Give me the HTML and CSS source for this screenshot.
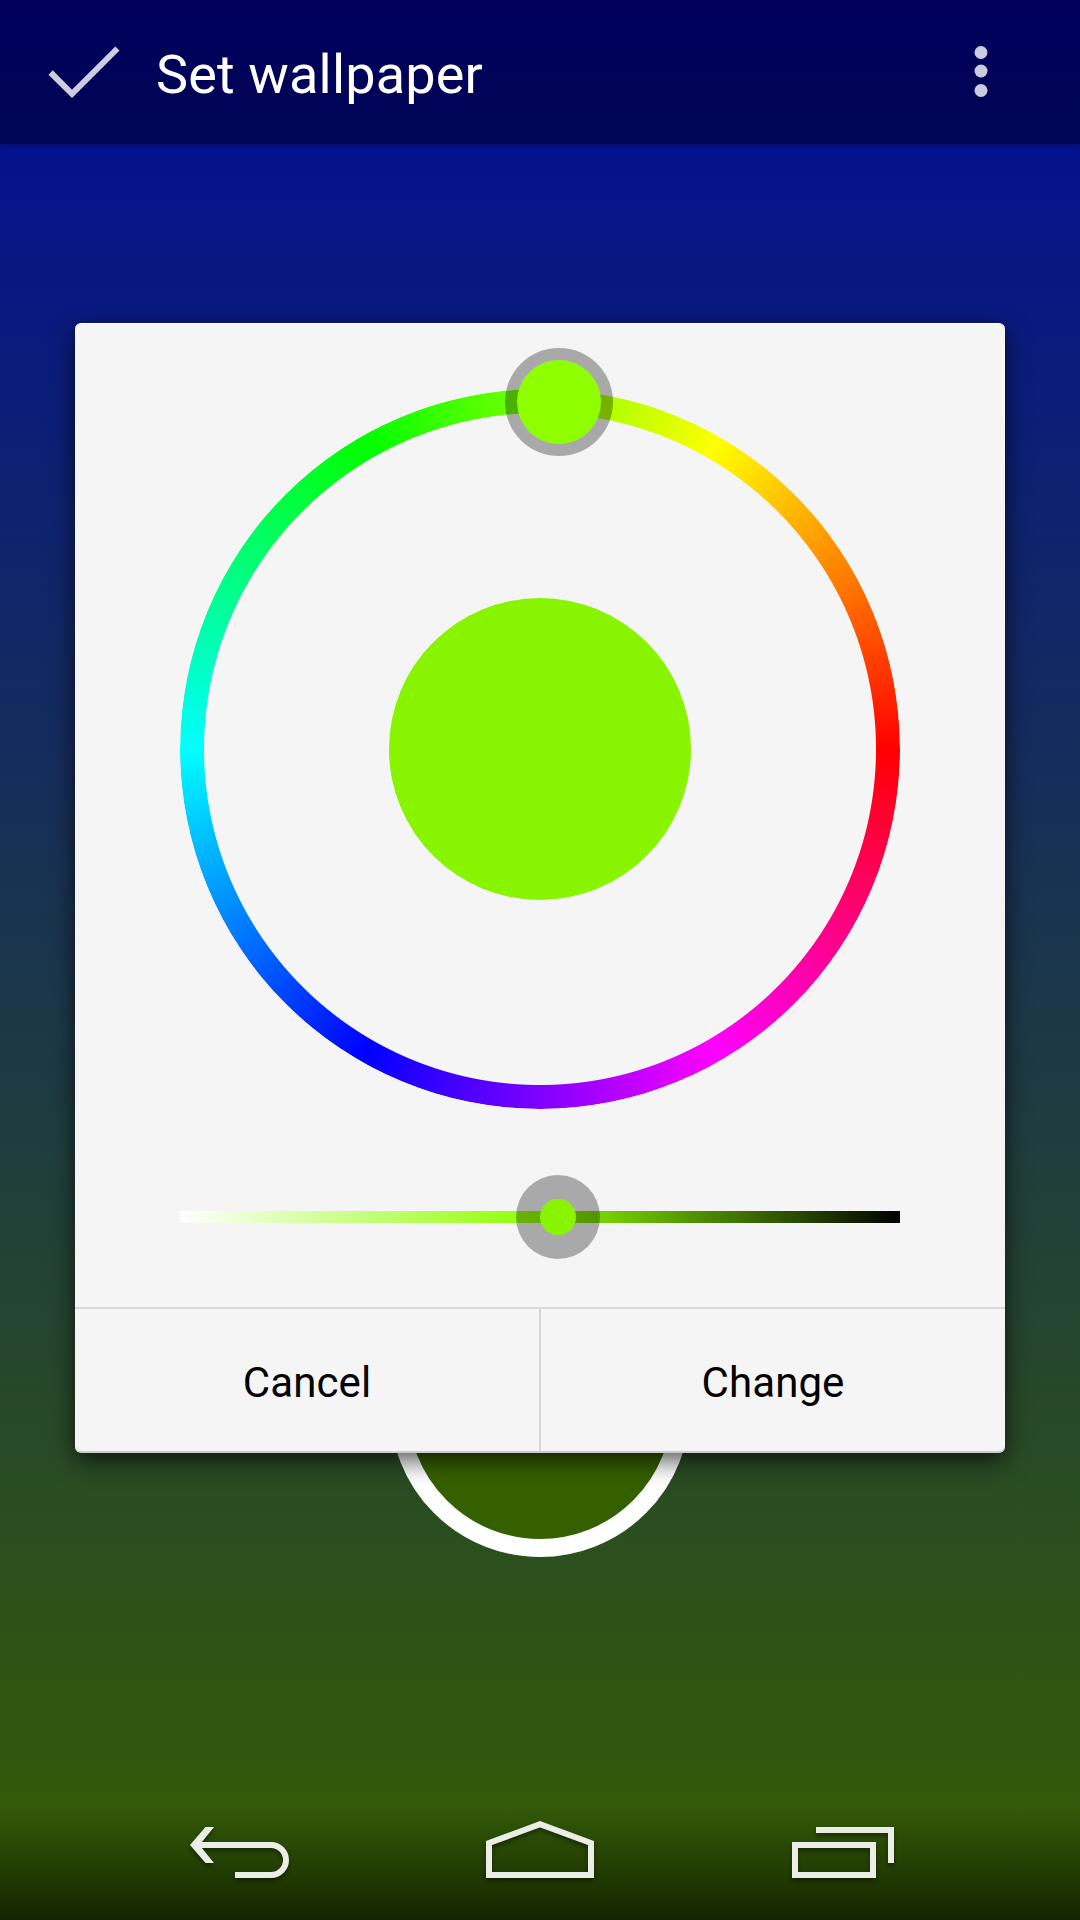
FILE: index.html
```html
<!DOCTYPE html>
<html lang="en">

<head>
    <meta charset="UTF-8">
    <meta name="viewport" content="width=device-width, initial-scale=1.0">
    <title>Set wallpaper</title>
    <link rel="stylesheet" href="styles.css">
</head>

<body>
    <header class="action-bar">
        <svg class="check" width="72" height="54" viewBox="0 0 72 54">
            <path d="M2.6 27.5L24 48.8L69.4 3.5" />
        </svg>
        <h1>Set wallpaper</h1>
        <svg class="overflow" width="14" height="52" viewBox="0 0 14 52">
            <circle cx="7" cy="6.5" r="6.5" />
            <circle cx="7" cy="25" r="6.5" />
            <circle cx="7" cy="44.5" r="6.5" />
        </svg>
    </header>

    <main>
        <div class="swatch"></div>
        <div class="dialog">
            <div class="picker">
                <div class="wheel">
                    <div class="ring"></div>
                    <div class="preview"></div>
                    <div class="hue-handle"></div>
                </div>
                <div class="slider">
                    <div class="slider-handle"></div>
                </div>
            </div>
            <div class="buttons">
                <button type="button">Cancel</button>
                <button type="button">Change</button>
            </div>
        </div>
    </main>

    <nav class="nav-bar">
        <svg width="108" height="66" viewBox="0 0 108 66">
            <path d="M9 24H85A15 15 0 0 1 85 54H49" />
            <path class="fill" d="M19.5 6H28L13.5 24L28 42H19.5L4 24Z" />
        </svg>
        <svg width="108" height="66" viewBox="0 0 108 66">
            <path d="M3 22L54 3.2L105 22V54H3Z" />
        </svg>
        <svg width="108" height="66" viewBox="0 0 108 66">
            <path d="M9 24H87V54H9ZM30 9H105V42" />
        </svg>
    </nav>
</body>

</html>
```
FILE: styles.css
```css
* {
    box-sizing: border-box;
}

body {
    margin: 0;
    height: 1920px;
    display: flex;
    flex-direction: column;
    font-family: Roboto, sans-serif;
    background: linear-gradient(#000c98, #355f00);
    overflow: hidden;
}

.action-bar {
    height: 144px;
    display: flex;
    align-items: center;
    padding: 0 92px 0 48px;
    background: linear-gradient(#00005c, #000556);
    box-shadow: 0 1px 5px rgba(0, 0, 0, 0.35);
}

.check {
    fill: none;
    stroke: #cccce0;
    stroke-width: 6;
}

.action-bar h1 {
    margin: 5px 0 0 36px;
    font-size: 54px;
    font-weight: 400;
    line-height: 64px;
    letter-spacing: 0.15px;
    color: #fff;
}

.overflow {
    margin-left: auto;
    fill: #cccce0;
}

main {
    position: relative;
    flex: 1;
    padding: 179px 75px 0;
}

/* preview circle, partly covered by the dialog */
.swatch {
    position: absolute;
    top: 1113px;
    left: 390px;
    width: 300px;
    height: 300px;
    border: 18px solid #fff;
    border-radius: 50%;
    background: #356000;
}

.dialog {
    position: relative;
    height: 1130px;
    display: flex;
    flex-direction: column;
    background: #f5f5f5;
    border-top: 1px solid #fff;
    border-bottom: 2px solid #ccc;
    border-radius: 6px;
    box-shadow: 0 8px 24px rgba(0, 0, 0, 0.65);
}

.picker {
    flex: 1;
    padding: 65px 105px 0;
}

.wheel {
    position: relative;
    width: 720px;
    height: 720px;
    display: flex;
    justify-content: center;
    align-items: center;
}

.ring {
    position: absolute;
    inset: 0;
    border-radius: 50%;
    background: conic-gradient(from 90deg, #f00, #f0f, #00f, #0ff, #0f0, #ff0, #f00);
    mask: radial-gradient(circle, transparent 335.5px, #000 336.5px);
}

.preview {
    width: 302px;
    height: 302px;
    border-radius: 50%;
    background: #88f400;
}

.hue-handle {
    position: absolute;
    top: -41px;
    left: 325px;
    width: 108px;
    height: 108px;
    border: 12px solid rgba(0, 0, 0, 0.31);
    border-radius: 50%;
    background: #8fff00;
    background-clip: padding-box;
}

.slider {
    position: relative;
    height: 12px;
    margin-top: 102px;
    background: linear-gradient(to right, #fff, #8fff00 50%, #000);
}

.slider-handle {
    position: absolute;
    top: -36px;
    left: 336px;
    width: 84px;
    height: 84px;
    border: 24px solid rgba(0, 0, 0, 0.31);
    border-radius: 50%;
    background: #88f400;
    background-clip: padding-box;
}

.buttons {
    height: 144px;
    display: flex;
    border-top: 2px solid #d8d8d8;
}

.buttons button {
    flex: 1;
    padding: 4px 0 0;
    border: none;
    background: none;
    font-family: inherit;
    font-size: 42px;
    letter-spacing: 0.1px;
    color: #000;
}

.buttons button + button {
    border-left: 2px solid #d8d8d8;
}

.nav-bar {
    height: 144px;
    display: flex;
    justify-content: space-between;
    padding: 45px 186px 0;
    background: linear-gradient(transparent 20%, rgba(0, 0, 0, 0.3) 60%, rgba(0, 0, 0, 0.62));
}

.nav-bar svg {
    fill: none;
    stroke: #eaeee6;
    stroke-width: 6;
    filter: drop-shadow(0 3px 2px rgba(0, 0, 0, 0.4));
}

.nav-bar .fill {
    fill: #eaeee6;
    stroke: none;
}
```
